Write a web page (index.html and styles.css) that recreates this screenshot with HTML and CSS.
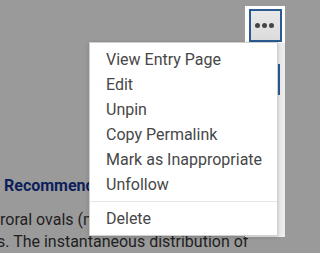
FILE: index.html
```html
<!DOCTYPE html>
<html lang="en">
<head>
<meta charset="utf-8">
<title>Entry menu</title>
<link rel="stylesheet" href="styles.css">
</head>
<body>
<main class="page">
  <h2 class="section-title">Recommended Articles</h2>
  <p class="body-text">
    <span class="line line-a">roral ovals (northern and southern) are</span>
    <span class="line line-b">s. The instantaneous distribution of</span>
  </p>
</main>

<div class="action-column">
  <button class="more-btn" type="button" aria-label="More actions">
    <span class="dot"></span><span class="dot"></span><span class="dot"></span>
  </button>
  <span class="focus-edge"></span>
</div>

<ul class="menu" role="menu">
  <li class="menu-item">View Entry Page</li>
  <li class="menu-item">Edit</li>
  <li class="menu-item">Unpin</li>
  <li class="menu-item">Copy Permalink</li>
  <li class="menu-item">Mark as Inappropriate</li>
  <li class="menu-item">Unfollow</li>
  <li class="menu-sep" role="separator"></li>
  <li class="menu-item">Delete</li>
</ul>
</body>
</html>
```

FILE: styles.css
```css
html, body {
  margin: 0;
  padding: 0;
}

body {
  width: 312px;
  height: 253px;
  overflow: hidden;
  background: #9a9a9a;
  font-family: Roboto, "Liberation Sans", sans-serif;
  font-size: 16px;
  line-height: 22px;
  color: #1f1f1f;
  position: relative;
}

.page {
  padding: 175px 0 0 4px;
}

.section-title {
  margin: 0;
  font-size: 16px;
  line-height: 22px;
  font-weight: 700;
  color: #0c1f5a;
  white-space: nowrap;
}

.body-text {
  margin: 12px 0 0 -4px;
}

.line {
  display: block;
  white-space: nowrap;
}

.line-a {
  margin-left: 0;
}

.line-b {
  margin-left: -3px;
}

.action-column {
  position: absolute;
  left: 245px;
  top: 6px;
  width: 40px;
  height: 231px;
  background: linear-gradient(#ffffff 0 37px, #ececec 37px);
}

.more-btn {
  position: absolute;
  left: 4px;
  top: 3px;
  width: 33px;
  height: 33px;
  box-sizing: border-box;
  margin: 0;
  padding: 0 3px 0 0;
  border: 2px solid #2c5b92;
  background: linear-gradient(#e8e8e8, #dcdcdc);
  display: flex;
  align-items: center;
  justify-content: center;
  gap: 2px;
}

.dot {
  width: 5px;
  height: 5px;
  border-radius: 50%;
  background: #454545;
}

.focus-edge {
  position: absolute;
  left: 33px;
  top: 58px;
  width: 2px;
  height: 31px;
  background: #2c5b92;
}

.menu {
  position: absolute;
  left: 89px;
  top: 42px;
  width: 187px;
  margin: 0;
  padding: 4px 0;
  list-style: none;
  background: #ffffff;
  border: 1px solid #cfcfcf;
  box-shadow: 0 1px 4px rgba(0, 0, 0, 0.18);
}

.menu-item {
  padding: 0 16px;
  line-height: 25px;
  font-size: 16px;
  color: #474747;
  white-space: nowrap;
}

.menu-sep {
  height: 1px;
  margin: 4px 0;
  background: #e6e6e6;
}
```
